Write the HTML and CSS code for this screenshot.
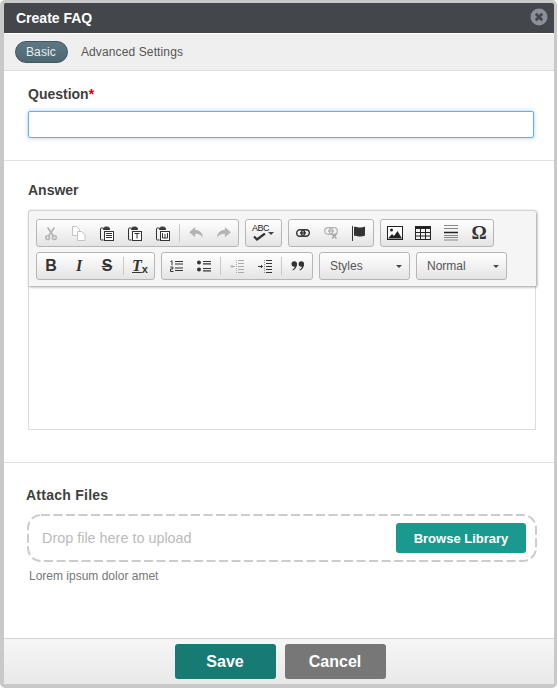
FILE: index.html
```html
<!DOCTYPE html>
<html lang="en">
<head>
  <meta charset="UTF-8">
  <meta name="viewport" content="width=device-width, initial-scale=1.0">
  <title>Create FAQ</title>
  <link rel="stylesheet" href="styles.css">
</head>
<body>

<div class="modal">
  <div class="modal-title">
    <span>Create FAQ</span>
    <button class="close" aria-label="Close">
      <svg width="18" height="18" viewBox="0 0 18 18"><circle cx="9" cy="9" r="8.5" fill="#8b8f99"/><path d="M5.800 5.800l6.400 6.400M12.200 5.800l-6.400 6.400" stroke="#43464b" stroke-width="2.800"/></svg>
    </button>
  </div>

  <div class="tabs">
    <span class="tab active">Basic</span>
    <span class="tab">Advanced Settings</span>
  </div>

  <div class="modal-body">
    <div class="section section-question">
      <label class="field-label">Question<span class="req">*</span></label>
      <input type="text" class="text-input">
    </div>

    <div class="section section-answer">
      <label class="field-label">Answer</label>
      <div class="editor">
        <div class="toolbar">
          <div class="tool-row">
            <div class="group">
              <span class="tool"><svg width="12" height="15" viewBox="0 0 16 18" fill="none" stroke="#b4b4b4" stroke-width="2.200"><path d="M3.500 1l7.500 11M12.500 1L5 12"/><circle cx="3.500" cy="14.500" r="2.500"/><circle cx="12.500" cy="14.500" r="2.500"/></svg></span>
              <span class="tool"><svg width="14" height="15" viewBox="0 0 14 15" fill="#fff" stroke="#c4c4c4"><path d="M.5.500h4l3 3v6h-7z"/><path d="M5.500 5.500h4l3.500 3v6h-7.500z"/></svg></span>
              <span class="tool"><svg width="14" height="15" viewBox="0 0 14 15" fill="none" stroke="#333"><path d="M3 2h-1.500a1 1 0 0 0-1 1v10a1 1 0 0 0 1 1h2"/><path d="M3.500 2.500c0-2 6-2 6 0v1h-6z" fill="#444"/><rect x="4.500" y="5.500" width="9" height="9" fill="#fff"/><path d="M6 7.500h6M6 9.500h6M6 11.500h6"/></svg></span>
              <span class="tool"><svg width="14" height="15" viewBox="0 0 14 15" fill="none" stroke="#333"><path d="M3 2h-1.500a1 1 0 0 0-1 1v10a1 1 0 0 0 1 1h2"/><path d="M3.500 2.500c0-2 6-2 6 0v1h-6z" fill="#444"/><rect x="4.500" y="5.500" width="9" height="9" fill="#fff"/><path d="M6.500 7.500h5M9 7.500v5"/></svg></span>
              <span class="tool"><svg width="14" height="15" viewBox="0 0 14 15" fill="none" stroke="#333"><path d="M3 2h-1.500a1 1 0 0 0-1 1v10a1 1 0 0 0 1 1h2"/><path d="M3.500 2.500c0-2 6-2 6 0v1h-6z" fill="#444"/><rect x="4.500" y="5.500" width="9" height="9" fill="#fff"/><path d="M6.500 7v5h5V7M9 8v4"/></svg></span>
              <span class="sep"></span>
              <span class="tool"><svg width="14" height="12" viewBox="0 0 16 14" fill="#b4b4b4"><path d="M0 6l7-6v3.500c5 0 9 3 9 9-2-3-4.500-4.500-9-4.500V12z"/></svg></span>
              <span class="tool"><svg width="14" height="12" viewBox="0 0 16 14" fill="#b4b4b4"><path d="M16 6L9 0v3.500c-5 0-9 3-9 9 2-3 4.500-4.500 9-4.500V12z"/></svg></span>
            </div>
            <div class="group">
              <span class="tool tool-spell">
                <span class="abc">ABC</span>
                <svg class="check" width="15" height="8" viewBox="0 0 15 8" fill="none" stroke="#333" stroke-width="2.200"><path d="M1 3.500l3 3 8-6"/></svg>
                <span class="caret"></span>
              </span>
            </div>
            <div class="group">
              <span class="tool"><svg width="14" height="8" viewBox="0 0 14 8" fill="none" stroke="#333" stroke-width="1.400"><rect x=".7" y=".7" width="8" height="6.600" rx="3.300"/><rect x="5.300" y=".7" width="8" height="6.600" rx="3.300"/><path d="M4 4h6"/></svg></span>
              <span class="tool"><svg width="14" height="12" viewBox="0 0 14 12" fill="none" stroke="#b4b4b4" stroke-width="1.300"><rect x=".7" y=".7" width="8" height="6.600" rx="3.300"/><rect x="5.300" y=".7" width="8" height="6.600" rx="3.300"/><path d="M4 4h6"/><path d="M8 7l4.500 4.500M12.500 7L8 11.500" stroke="#a0a0a0"/></svg></span>
              <span class="tool"><svg width="14" height="15" viewBox="0 0 14 15" fill="#333"><rect x="0" y="0" width="1" height="15"/><path d="M2 1c2.500-1 3.500.5 6 .5 1.800 0 3-.3 5-1v9c-2 .7-3.200 1-5 1-2.500 0-3.500-1.500-6-.5z"/></svg></span>
            </div>
            <div class="group">
              <span class="tool"><svg width="16" height="14" viewBox="0 0 16 14"><rect x=".5" y=".5" width="15" height="13" fill="#fff" stroke="#222"/><circle cx="4.500" cy="4" r="1.500" fill="#222"/><path d="M1 12.500l4-4.500 2 2 3.500-5 4.500 7.500z" fill="#222"/></svg></span>
              <span class="tool"><svg width="16" height="14" viewBox="0 0 16 14" fill="none" stroke="#222"><rect x=".5" y=".5" width="15" height="13"/><path d="M0 1.500h16" stroke-width="3"/><path d="M.5 6.500h15M.5 10h15M5.500 3v11M10.500 3v11"/></svg></span>
              <span class="tool"><svg width="14" height="16" viewBox="0 0 14 16" stroke="#888"><path d="M0 .5h14M0 3.500h14M0 10.500h14M0 12.500h14M0 15h14"/><path d="M0 7.500h14" stroke="#222" stroke-width="1.600"/></svg></span>
              <span class="tool omega">Ω</span>
            </div>
          </div>
          <div class="tool-row">
            <div class="group">
              <span class="tool glyph glyph-b">B</span>
              <span class="tool glyph glyph-i">I</span>
              <span class="tool glyph glyph-s">S</span>
              <span class="sep"></span>
              <span class="tool glyph glyph-x"><span class="glyph-t">T</span><span class="glyph-sub">x</span></span>
            </div>
            <div class="group">
              <span class="tool"><svg width="13" height="12" viewBox="0 0 13 12" fill="none" stroke="#333"><path d="M.5 1.500L2 .8v4.400"/><path d="M.3 7h2.500v2H.5v2.500h3"/><path d="M5 1.500h8M5 4h8M5 8h8M5 10.500h8" stroke-width="1.200"/></svg></span>
              <span class="tool"><svg width="14" height="12" viewBox="0 0 14 12"><circle cx="2" cy="2.500" r="2" fill="#333"/><circle cx="2" cy="9.500" r="2" fill="#333"/><path d="M6 1.500h8M6 3.800h8M6 8.500h8M6 10.800h8" stroke="#333" stroke-width="1.200"/></svg></span>
              <span class="sep"></span>
              <span class="tool"><svg width="14" height="13" viewBox="0 0 14 13" fill="none" stroke="#aaa"><path d="M6.500 0v13" stroke-dasharray="1 1"/><path d="M8 .5h6M8 3.500h6M8 6.500h6M8 9.500h6M8 12.500h6"/><path d="M5 6.500H1M2.500 5L1 6.500 2.500 8"/></svg></span>
              <span class="tool"><svg width="14" height="13" viewBox="0 0 14 13" fill="none" stroke="#333"><path d="M6.500 0v13" stroke-dasharray="1 1" stroke="#888"/><path d="M8 .5h6M8 3.500h6M8 6.500h6M8 9.500h6M8 12.500h6"/><path d="M0 6.500h4M3 5l1.500 1.500L3 8"/></svg></span>
              <span class="sep"></span>
              <span class="tool"><svg width="14" height="10" viewBox="0 0 16 12" fill="#333"><circle cx="3.500" cy="3.500" r="3.300"/><path d="M6.800 3.500c0 3.500-2 6.500-5 8l-.6-1c1.800-1 3-2.500 3-4.500z"/><circle cx="12" cy="3.500" r="3.300"/><path d="M15.300 3.500c0 3.500-2 6.500-5 8l-.6-1c1.800-1 3-2.500 3-4.500z"/></svg></span>
            </div>
            <div class="group combo">
              <span>Styles</span><span class="caret"></span>
            </div>
            <div class="group combo">
              <span>Normal</span><span class="caret"></span>
            </div>
          </div>
        </div>
        <div class="editor-area"></div>
      </div>
    </div>

    <div class="section section-files">
      <label class="field-label">Attach Files</label>
      <div class="dropzone">
        <svg class="dash" width="510" height="48"><rect x="1" y="1" width="508" height="46" rx="13" fill="none" stroke="#ccc" stroke-width="2" stroke-dasharray="9 3.500"/></svg>
        <span class="drop-text">Drop file here to upload</span>
        <button class="browse">Browse Library</button>
      </div>
      <p class="hint">Lorem ipsum dolor amet</p>
    </div>
  </div>

  <div class="modal-footer">
    <button class="btn btn-save">Save</button>
    <button class="btn btn-cancel">Cancel</button>
  </div>
</div>

</body>
</html>
```

FILE: styles.css
```css
body, html {
  margin: 0;
  padding: 0;
  background: #fff;
  font-family: "Liberation Sans", Arial, sans-serif;
}

.modal {
  box-sizing: border-box;
  width: 557px;
  height: 688px;
  display: flex;
  flex-direction: column;
  background: #fff;
  border: solid #c9c9c9;
  border-width: 3px 3px 4px 4px;
  border-radius: 5px;
  overflow: hidden;
}

.modal-title {
  flex: none;
  height: 30px;
  display: flex;
  align-items: center;
  justify-content: space-between;
  padding: 0 6px 0 12px;
  background: #43464b;
  color: #fff;
  font-size: 14px;
  font-weight: bold;
}

.close {
  display: block;
  width: 18px;
  height: 18px;
  padding: 0;
  border: none;
  background: none;
  margin-top: -3px;
}

.close svg {
  display: block;
}

.tabs {
  flex: none;
  height: 36px;
  margin-top: 1px;
  display: flex;
  align-items: center;
  gap: 13px;
  padding: 0 11px;
  background: #efefef;
  border-bottom: 1px solid #ddd;
  font-size: 12px;
  letter-spacing: .12px;
  color: #555;
}

.tab.active {
  padding: 3px 11px 3px 10px;
  border-radius: 11px;
  background: linear-gradient(#5b7884, #4e6872);
  border: 1px solid #44565e;
  color: #e8eef0;
  font-weight: normal;
}

.modal-body {
  flex: 1;
  display: flex;
  flex-direction: column;
}

.section {
  padding-right: 20px;
}

.section-question {
  height: 90px;
  box-sizing: border-box;
  padding-top: 15px;
  padding-left: 24px;
  border-bottom: 1px solid #e2e2e2;
}

.section-answer {
  height: 302px;
  box-sizing: border-box;
  padding-top: 21px;
  padding-left: 24px;
  padding-right: 18px;
  border-bottom: 1px solid #e2e2e2;
}

.section-files {
  padding-top: 24px;
  padding-left: 22px;
}

.field-label {
  display: block;
  font-size: 14px;
  line-height: 17px;
  font-weight: bold;
  color: #3f3f3f;
}

.section-files .field-label {
  letter-spacing: .25px;
}

.req {
  color: #d40000;
}

.text-input {
  display: block;
  box-sizing: border-box;
  width: 100%;
  height: 27px;
  margin-top: 8px;
  border: 1px solid #66afe9;
  border-radius: 2px;
  outline: none;
  box-shadow: 0 0 4px rgba(102, 175, 233, .6);
}

.editor {
  margin-top: 11px;
}

.toolbar {
  box-sizing: border-box;
  height: 76px;
  padding: 8px 8px 0;
  display: flex;
  flex-direction: column;
  gap: 5px;
  background: #f5f5f5;
  border-radius: 3px 3px 0 0;
  border: solid #d4d4d4;
  border-width: 1px 0 0 1px;
  box-shadow: 1px 1px 3px rgba(0, 0, 0, .4);
  position: relative;
}

.tool-row {
  display: flex;
  gap: 6px;
  height: 28px;
}

.group {
  display: flex;
  align-items: center;
  margin-left: -1px;
  margin-right: 1px;
  border: 1px solid #b6b6b6;
  border-radius: 3px;
  background: linear-gradient(#fff, #e4e4e4);
  box-sizing: content-box;
  height: 26px;
}

.tool {
  width: 28px;
  height: 26px;
  display: flex;
  align-items: center;
  justify-content: center;
  position: relative;
}

.tool-spell {
  width: 35px;
}

.abc {
  position: absolute;
  left: 6px;
  top: 3px;
  font-size: 9px;
  color: #222;
  letter-spacing: -.5px;
}

.check {
  position: absolute;
  left: 7px;
  top: 13px;
}

.caret {
  display: block;
  width: 0;
  height: 0;
  border: 3px solid transparent;
  border-top: 3px solid #444;
  border-bottom: none;
}

.tool-spell .caret {
  position: absolute;
  right: 7px;
  top: 12px;
}

.sep {
  width: 5px;
  height: 18px;
  background: linear-gradient(#c8c8c8, #c8c8c8) center / 1px 100% no-repeat;
}

.omega {
  font-family: "Liberation Serif", serif;
  font-size: 19px;
  font-weight: bold;
  color: #333;
}

.glyph {
  color: #333;
  font-size: 15px;
  font-weight: bold;
}

.glyph-b {
  font-family: "Liberation Sans", sans-serif;
  font-size: 16px;
}

.glyph-i {
  font-family: "Liberation Serif", serif;
  font-style: italic;
  font-size: 16px;
}

.glyph-s {
  text-decoration: line-through;
  font-size: 16px;
}

.glyph-t {
  font-family: "Liberation Serif", serif;
  font-style: italic;
  font-size: 16px;
  text-decoration: underline;
}

.glyph-sub {
  font-size: 11px;
  align-self: flex-end;
  margin-bottom: 4px;
}

.combo {
  justify-content: space-between;
  padding: 0 7px 0 10px;
  width: 72px;
  font-size: 12px;
  color: #555;
}

.editor-area {
  height: 143px;
  border: 1px solid #dcdcdc;
  border-top: none;
}

.dropzone {
  position: relative;
  box-sizing: border-box;
  width: 510px;
  height: 48px;
  margin-top: 10px;
  margin-left: 1px;
  display: flex;
  align-items: center;
  justify-content: space-between;
  padding: 0 11px 0 15px;
}

.dash {
  position: absolute;
  left: 0;
  top: 0;
}

.drop-text {
  font-size: 14.4px;
  color: #bbb;
}

.browse {
  width: 130px;
  height: 30px;
  border: none;
  border-radius: 3px;
  background: #1a998e;
  color: #fff;
  font-family: inherit;
  font-size: 13px;
  font-weight: bold;
}

.hint {
  margin: 7px 0 0 3px;
  font-size: 12px;
  color: #777;
}

.modal-footer {
  flex: none;
  box-sizing: border-box;
  height: 46px;
  display: flex;
  justify-content: center;
  gap: 9px;
  padding: 5px 0 0 2px;
  background: linear-gradient(#f6f6f6, #e9e9e9);
  border-top: 1px solid #d4d4d4;
}

.btn {
  width: 101px;
  height: 35px;
  border: none;
  border-radius: 3px;
  color: #fff;
  font-family: inherit;
  font-size: 16px;
  font-weight: bold;
}

.btn-save {
  background: #177a73;
}

.btn-cancel {
  background: #777;
}
```
